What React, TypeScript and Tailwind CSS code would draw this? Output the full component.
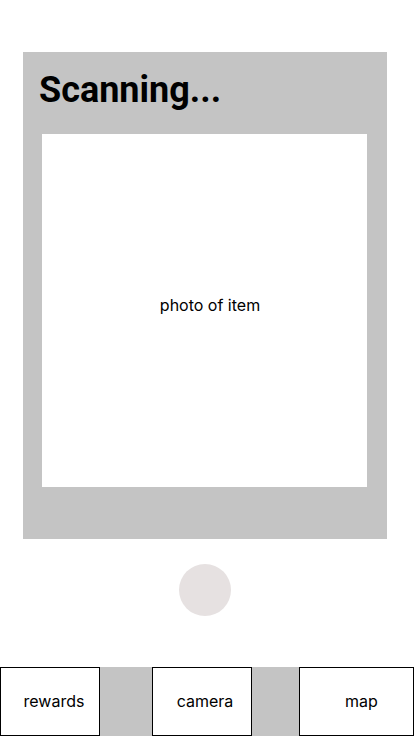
import React from 'react';

const NavButton: React.FC<{ label: string; className: string }> = ({ label, className }) => (
  <div
    className={`h-[69px] border border-black bg-white flex items-center justify-center pb-[2px] text-[16px] text-black ${className}`}
  >
    {label}
  </div>
);

export default function App() {
  return (
    <div className="w-[414px] h-[736px] bg-white flex flex-col overflow-hidden font-['Inter',sans-serif]">
      {/* Scan panel */}
      <div className="mt-[52px] ml-[23px] w-[364px] h-[487px] bg-[#c4c4c4] flex flex-col">
        <h1 className="pt-[17px] pl-[16px] text-[36px] leading-[42px] font-bold text-black font-['Roboto',sans-serif]">
          Scanning...
        </h1>
        <div className="mt-[23px] ml-[19px] w-[325px] h-[353px] bg-white flex items-center justify-center pl-[11px] pb-[12px]">
          <span className="text-[16px] text-black">photo of item</span>
        </div>
      </div>

      {/* Shutter */}
      <div className="mt-[25px] ml-[179px] w-[52px] h-[52px] rounded-full bg-[#e6e1e1]" />

      {/* Bottom nav */}
      <div className="mt-[51px] h-[69px] bg-[#c4c4c4] flex">
        <NavButton label="rewards" className="w-[100px] pl-[8px]" />
        <NavButton label="camera" className="ml-[52px] w-[100px] pl-[6px]" />
        <NavButton label="map" className="ml-[47px] w-[115px] pl-[10px]" />
      </div>
    </div>
  );
}
